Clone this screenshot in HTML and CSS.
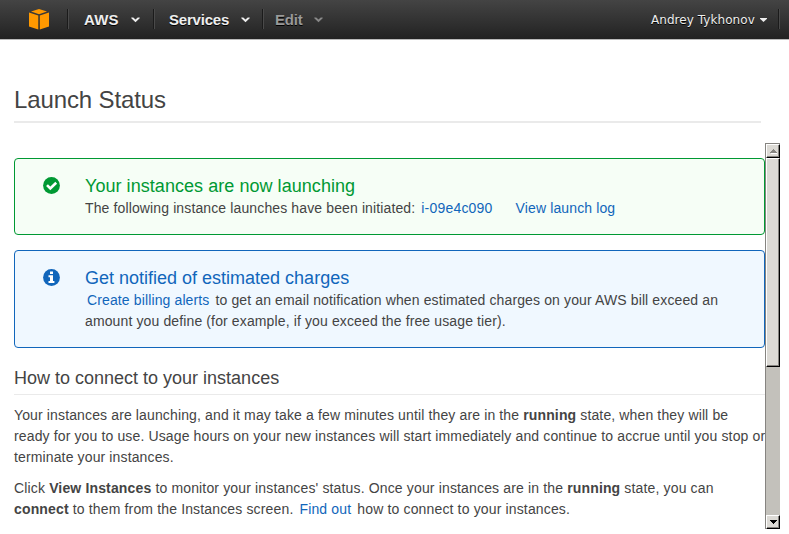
FILE: index.html
```html
<!DOCTYPE html>
<html lang="en">
<head>
<meta charset="utf-8">
<title>Launch Status</title>
<link rel="stylesheet" href="styles.css">
</head>
<body>
<header class="topbar">
  <a class="logo"><svg width="20" height="21" viewBox="0 0 20 21" fill="#ff9900"><path d="M10 0L18 2.6 10 5.2 2 2.6Z"/><path d="M0 3.6L9.3 6.4V20.6L0 17.4Z"/><path d="M20 3.6L10.8 6.4V20.6L20 17.4Z"/></svg></a>
  <nav class="menu">
    <a class="item aws">AWS<svg class="chev" width="9" height="6" viewBox="0 0 9 6"><path d="M.3 .5H2.3L4.5 2.6 6.7 .5H8.7V1.3L4.5 5.2 .3 1.3Z"/></svg></a>
    <a class="item services"><span>Services</span><svg class="chev" width="9" height="6" viewBox="0 0 9 6"><path d="M.3 .5H2.3L4.5 2.6 6.7 .5H8.7V1.3L4.5 5.2 .3 1.3Z"/></svg></a>
    <a class="item edit">Edit<svg class="chev" width="9" height="6" viewBox="0 0 9 6"><path d="M.3 .5H2.3L4.5 2.6 6.7 .5H8.7V1.3L4.5 5.2 .3 1.3Z"/></svg></a>
  </nav>
  <a class="user">Andrey Tykhonov<svg width="7" height="4" viewBox="0 0 7 4"><path d="M0 0H7V.7L3.5 4 0 .7Z"/></svg></a>
</header>
<main>
  <h1>Launch Status</h1>
  <div class="pane">
    <div class="content">
      <section class="alert success">
        <svg class="icon" width="17" height="17" viewBox="0 0 17 17"><circle cx="8.5" cy="8.5" r="8.4" fill="#009933"/><path d="M4 8.2L7.3 11.5 13.2 5.7" fill="none" stroke="#fff" stroke-width="2.6"/></svg>
        <div>
          <h2>Your instances are now launching</h2>
          <p>The following instance launches have been initiated: <a class="instance">i-09e4c090</a><a class="log">View launch log</a></p>
        </div>
      </section>
      <section class="alert info">
        <svg class="icon" width="17" height="17" viewBox="0 0 17 17"><circle cx="8.5" cy="8.5" r="8.4" fill="#1166bb"/><path d="M7 2.5H10V5H7ZM5.5 6.3H10V12H11.4V14H5.5V12H7V8.2H5.5Z" fill="#fff"/></svg>
        <div>
          <h2>Get notified of estimated charges</h2>
          <p><a class="padded">Create billing alerts</a> to get an email notification when estimated charges on your AWS bill exceed an<br>amount you define (for example, if you exceed the free usage tier).</p>
        </div>
      </section>
      <h2 class="section-title">How to connect to your instances</h2>
      <p class="text">Your instances are launching, and it may take a few minutes until they are in the <b>running</b> state, when they will be<br>ready for you to use. Usage hours on your new instances will start immediately and continue to accrue until you stop or<br>terminate your instances.</p>
      <p class="text steps">Click <b>View Instances</b> to monitor your instances' status. Once your instances are in the <b>running</b> state, you can<br><b>connect</b> to them from the Instances screen. <a class="padded">Find out</a> how to connect to your instances.</p>
    </div>
    <div class="scrollbar">
      <div class="button"><svg width="7" height="5" viewBox="0 0 7 5" shape-rendering="crispEdges"><path d="M3 0H4V1H5V2H6V3H7V4H0V3H1V2H2V1H3Z" fill="#868480"/><path d="M1 4H7V5H1Z" fill="#fff"/></svg></div>
      <div class="thumb"></div>
      <div class="track"></div>
      <div class="button"><svg width="7" height="4" viewBox="0 0 7 4" shape-rendering="crispEdges"><path d="M0 0H7V1H6V2H5V3H4V4H3V3H2V2H1V1H0Z"/></svg></div>
    </div>
  </div>
</main>
</body>
</html>
```
FILE: styles.css
```css
* { box-sizing: border-box; }
body {
  margin: 0;
  height: 534px;
  overflow: hidden;
  background: #fff;
  color: #444;
  font: 14px/21px "Liberation Sans", Arial, sans-serif;
  white-space: nowrap;
}
h1, h2, p { margin: 0; font-weight: normal; }
p { letter-spacing: .125px; }
a { color: #1166bb; }

.topbar {
  display: flex;
  height: 40px;
  padding-top: 9px;
  background: linear-gradient(#444, #222 39px);
  border-bottom: 1px solid #bbb;
}
.logo { width: 67px; padding-left: 29px; }
.logo svg { display: block; }
.menu { display: flex; flex: 1; }
.item {
  display: flex;
  align-items: center;
  justify-content: space-between;
  height: 20px;
  padding: 2px 13px 0 15px;
  border-left: 1px solid #1b1b1b;
  box-shadow: inset 1px 0 #4a4a4a;
  color: #eee;
  fill: #eee;
  font-weight: bold;
  font-size: 15px;
  line-height: 20px;
  text-shadow: 0 1px 0 #000;
}
.aws { width: 86px; padding-left: 16px; letter-spacing: .2px; }
.services { width: 109px; padding-right: 12px; letter-spacing: -.2px; }
.edit { width: 72px; padding: 2px 11px 0 12px; color: #999; fill: #888; letter-spacing: -.2px; }
.user {
  display: flex;
  align-items: center;
  gap: 5px;
  width: 129px;
  height: 20px;
  margin-right: 9px;
  padding-top: 2px;
  border-right: 1px solid #4a4a4a;
  box-shadow: inset -1px 0 #1b1b1b;
  color: #eee;
  fill: #eee;
  font: 12px/20px "DejaVu Sans", Verdana, sans-serif;
  letter-spacing: .06px;
  text-shadow: 0 1px 0 #000;
}

main { padding: 40px 0 0 14px; }
h1 {
  width: 747px;
  height: 43px;
  padding-top: 5px;
  border-bottom: 2px solid #eaeaea;
  font-size: 24px;
  line-height: 30px;
  letter-spacing: -.12px;
}
.pane { display: flex; height: 387px; margin-top: 20px; }
.content { width: 751px; height: 387px; padding-top: 15px; }
.alert {
  display: flex;
  margin-bottom: 15px;
  padding: 16px 0 15px 28px;
  border: 1px solid;
  border-radius: 4px;
}
.alert .icon { flex: none; margin: 1.6px 25.4px 0 -.4px; }
.success { border-color: #009933; background: #f6fef6; }
.info { border-color: #1166bb; background: #f0f8ff; }
h2 { font-size: 18px; line-height: 22px; }
.alert h2 { margin-bottom: 1px; }
.success h2 { color: #009933; letter-spacing: .05px; }
.info h2 { color: #1166bb; }
.instance { margin: 0 23px 0 2px; letter-spacing: .2px; }
.padded { margin: 0 2px; }
.section-title {
  height: 27px;
  margin: 20px 0 10px;
  border-bottom: 1px solid #eaeaea;
  line-height: 20px;
}
.text { margin-bottom: 10px; letter-spacing: .133px; }
.steps { letter-spacing: .15px; }

.scrollbar {
  display: flex;
  flex-direction: column;
  width: 15px;
  height: 386px;
  border-top: 1px solid #868480;
  border-left: 1px solid #868480;
  background: #c3c1bb;
}
.button {
  display: flex;
  align-items: center;
  justify-content: center;
  flex: none;
  height: 14px;
}
.button, .thumb {
  border: 1px solid #fff;
  border-right-color: #000;
  border-bottom-color: #000;
  background: #dcdad5;
  box-shadow: inset -1px -1px #868480;
}
.thumb { height: 209px; }
.track { flex: 1; }
```
